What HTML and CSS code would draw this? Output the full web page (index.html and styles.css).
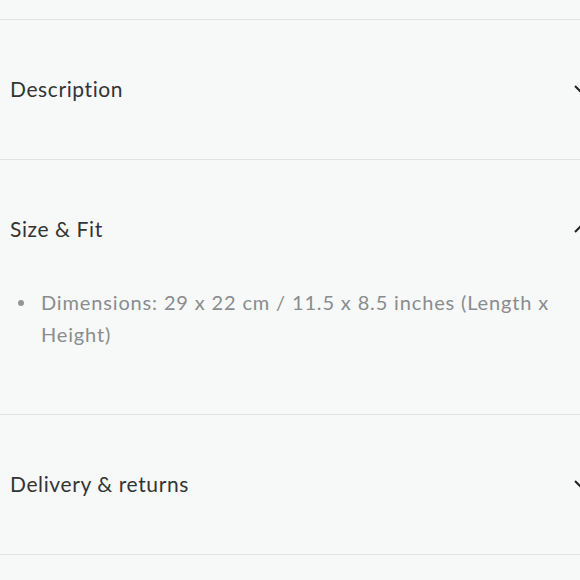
FILE: index.html
```html
<!DOCTYPE html>
<html>
<head>
    <meta charset="UTF-8">
    <meta name="viewport" content="width=device-width, initial-scale=1.0">
    <title>Product details</title>
    <link rel="stylesheet" href="styles.css">
</head>
<body>
    <div class="accordion">
        <div class="top-gap"></div>

        <div class="acc-item">
            <div class="acc-head">
                <span class="acc-title">Description</span>
                <svg class="chevron" width="14" height="8" viewBox="0 0 14 8"><path d="M1 1l6 6 6-6" fill="none" stroke="#222" stroke-width="2"/></svg>
            </div>
        </div>

        <div class="acc-item open">
            <div class="acc-head">
                <span class="acc-title">Size &amp; Fit</span>
                <svg class="chevron" width="14" height="8" viewBox="0 0 14 8"><path d="M1 7l6-6 6 6" fill="none" stroke="#222" stroke-width="2"/></svg>
            </div>
            <ul class="acc-body">
                <li><span class="dot"></span><span>Dimensions: 29 x 22 cm / 11.5 x 8.5 inches (Length x Height)</span></li>
            </ul>
        </div>

        <div class="acc-item">
            <div class="acc-head">
                <span class="acc-title">Delivery &amp; returns</span>
                <svg class="chevron" width="14" height="8" viewBox="0 0 14 8"><path d="M1 1l6 6 6-6" fill="none" stroke="#222" stroke-width="2"/></svg>
            </div>
        </div>
    </div>
</body>
</html>
```

FILE: styles.css
```css
body {
    margin: 0;
    padding: 0;
    background-color: #f7f8f8;
    font-family: Lato, "Noto Sans", sans-serif;
    overflow: hidden;
}

.accordion {
    width: 600px;
}

.top-gap {
    height: 19px;
}

.acc-item {
    border-top: 1px solid #e2e3e4;
}

.acc-item:last-child {
    border-bottom: 1px solid #e2e3e4;
}

.acc-head {
    display: flex;
    justify-content: space-between;
    align-items: center;
    padding: 53px 12px 54px 10px;
    line-height: 32px;
}

.acc-title {
    font-size: 21px;
    letter-spacing: 0.6px;
    color: #333435;
}

.chevron {
    display: block;
}

.open .acc-head {
    padding-bottom: 0;
}

.acc-body {
    list-style: none;
    margin: 0;
    padding: 41px 30px 64px 18px;
}

.acc-body li {
    display: flex;
    align-items: flex-start;
    font-size: 20px;
    line-height: 32px;
    letter-spacing: 0.85px;
    color: #8a8c8e;
}

.dot {
    flex: none;
    width: 6px;
    height: 6px;
    border-radius: 50%;
    background: #939597;
    margin: 14px 17px 0 0;
}
```
